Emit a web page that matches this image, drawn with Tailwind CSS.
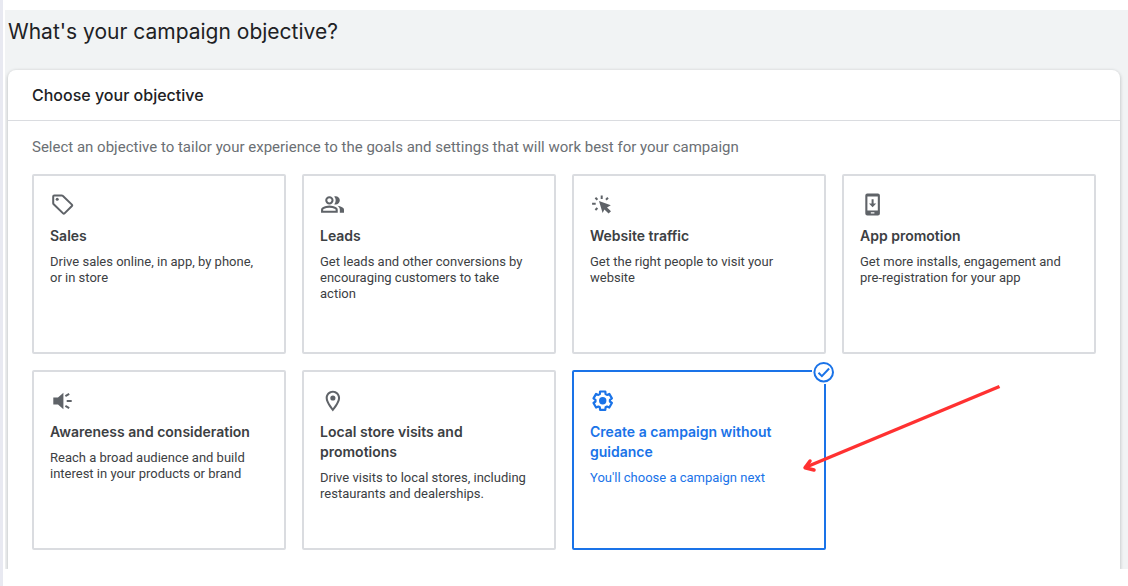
<!DOCTYPE html>
<html lang="en">
<head>
  <meta charset="UTF-8">
  <meta name="viewport" content="width=device-width, initial-scale=1.0">
  <title>Campaign objective</title>
  <script src="https://cdn.jsdelivr.net/npm/@tailwindcss/browser@4"></script>
</head>
<body class="min-h-screen bg-white border-l-3 border-[#e8e9f1] pt-[10px] pl-[2px] font-['Roboto',sans-serif] text-[#3c4043]">
  <main class="bg-[#f1f3f4] pt-2 pl-[3px] pr-2 overflow-hidden">
    <h1 class="font-['Inter',sans-serif] text-[21px] leading-7 text-[#202124]">What's your campaign objective?</h1>

    <section class="mt-6 bg-white rounded-t-lg shadow-[0_1px_3px_1px_rgba(60,64,67,0.2)]">
      <h2 id="objective-title" class="h-[51px] px-6 flex items-center border-b border-[#dadce0] font-['Inter',sans-serif] text-base font-medium text-[#202124]">Choose your objective</h2>

      <div class="px-6 pt-4 pb-[19px]">
        <p class="mb-[17px] text-[15px] leading-5 text-[#6b6f74]">Select an objective to tailor your experience to the goals and settings that will work best for your campaign</p>

        <div role="radiogroup" aria-labelledby="objective-title" class="grid grid-cols-4 gap-4">
          <label class="relative min-h-[180px] p-4 border-2 border-[#dadce0] rounded-xs cursor-pointer">
            <input type="radio" name="objective" value="sales" class="sr-only">
            <svg class="size-6 text-[#5f6368]" viewBox="0 0 24 24" fill="none" stroke="currentColor" stroke-width="2" stroke-linejoin="round" aria-hidden="true">
              <path d="M3.2 4.4q0-1 1-1h7.5q.6 0 1 .4l9.2 8.8q.7.7 0 1.4l-7.4 7.4q-.7.7-1.4 0l-9.4-9.2q-.5-.5-.5-1z"/>
              <circle cx="7.2" cy="7.3" r="1.5" fill="currentColor" stroke="none"/>
            </svg>
            <span class="block mt-[10px] font-['Inter',sans-serif] text-sm leading-5 font-semibold">Sales</span>
            <span class="block mt-2 text-[13px] leading-4">Drive sales online, in app, by phone, or in store</span>
          </label>

          <label class="relative min-h-[180px] p-4 border-2 border-[#dadce0] rounded-xs cursor-pointer">
            <input type="radio" name="objective" value="leads" class="sr-only">
            <svg class="size-6 text-[#5f6368]" viewBox="0 0 23 23" fill="currentColor" aria-hidden="true">
              <path d="M1 20v-2.8q0-.85.438-1.562Q1.875 14.925 2.6 14.55q1.55-.775 3.15-1.163Q7.35 13 9 13t3.25.387q1.6.388 3.15 1.163.725.375 1.162 1.088Q17 16.35 17 17.2V20Zm18 0v-3q0-1.1-.612-2.113-.613-1.012-1.738-1.737 1.275.15 2.4.512 1.125.363 2.1.888.9.5 1.375 1.112Q23 16.275 23 17v3ZM9 12q-1.65 0-2.825-1.175Q5 9.65 5 8q0-1.65 1.175-2.825Q7.35 4 9 4q1.65 0 2.825 1.175Q13 6.35 13 8q0 1.65-1.175 2.825Q10.65 12 9 12Zm10-4q0 1.65-1.175 2.825Q16.65 12 15 12q-.275 0-.7-.062-.425-.063-.7-.138.675-.8 1.037-1.775Q15 9.05 15 8q0-1.05-.363-2.025Q14.275 5 13.6 4.2q.35-.125.7-.163Q14.65 4 15 4q1.65 0 2.825 1.175Q19 6.35 19 8ZM3 18h12v-.8q0-.275-.137-.5-.138-.225-.363-.35-1.35-.675-2.725-1.012Q10.4 15 9 15t-2.775.338Q4.85 15.675 3.5 16.35q-.225.125-.362.35-.138.225-.138.5Zm6-8q.825 0 1.413-.588Q11 8.825 11 8t-.587-1.412Q9.825 6 9 6q-.825 0-1.412.588Q7 7.175 7 8t.588 1.412Q8.175 10 9 10Z"/>
            </svg>
            <span class="block mt-[10px] font-['Inter',sans-serif] text-sm leading-5 font-semibold">Leads</span>
            <span class="block mt-2 text-[13px] leading-4">Get leads and other conversions by encouraging customers to take action</span>
          </label>

          <label class="relative min-h-[180px] p-4 border-2 border-[#dadce0] rounded-xs cursor-pointer">
            <input type="radio" name="objective" value="traffic" class="sr-only">
            <svg class="size-6 text-[#5f6368]" viewBox="0 0 24 24" fill="currentColor" aria-hidden="true">
              <path d="M9 9l11.8 4.2-3.8 2.2 4 3.8-2.4 2.4-4.2-4.2-1.8 3.6z"/>
              <path d="M11.7 3.6V7M5.4 5.8l2 2M18 5.8l-2 2M2.1 11.8h3.6M5.4 18l2-2" fill="none" stroke="currentColor" stroke-width="2"/>
            </svg>
            <span class="block mt-[10px] font-['Inter',sans-serif] text-sm leading-5 font-semibold">Website traffic</span>
            <span class="block mt-2 text-[13px] leading-4">Get the right people to visit your website</span>
          </label>

          <label class="relative min-h-[180px] p-4 border-2 border-[#dadce0] rounded-xs cursor-pointer">
            <input type="radio" name="objective" value="app" class="sr-only">
            <svg class="size-6 text-[#5f6368]" viewBox="0 0 24 24" fill="currentColor" aria-hidden="true">
              <path fill-rule="evenodd" d="M7.3 1.4h10.6a2 2 0 0 1 2 2v18.2a2 2 0 0 1-2 2H7.3a2 2 0 0 1-2-2V3.4a2 2 0 0 1 2-2zM7.4 4.6v13.8h10.4V4.6zM10.8 20.3v1.3h3.6v-1.3z"/>
              <path d="M11.6 7.3h2v4.2h2.6l-3.6 3.8L9 11.5h2.6z"/>
            </svg>
            <span class="block mt-[10px] font-['Inter',sans-serif] text-sm leading-5 font-semibold">App promotion</span>
            <span class="block mt-2 text-[13px] leading-4">Get more installs, engagement and pre-registration for your app</span>
          </label>

          <label class="relative min-h-[180px] p-4 border-2 border-[#dadce0] rounded-xs cursor-pointer">
            <input type="radio" name="objective" value="awareness" class="sr-only">
            <svg class="size-6 text-[#5f6368]" viewBox="0 0 24 24" fill="currentColor" aria-hidden="true">
              <path d="M3.3 9.5H8l5.4-4.7v16.4L8 16.5H3.3z"/>
              <path d="M15.4 8.2l3.8-2.3M16.7 13h5M15.4 17.8l3.8 2.3" fill="none" stroke="currentColor" stroke-width="2"/>
            </svg>
            <span class="block mt-[10px] font-['Inter',sans-serif] text-sm leading-5 font-semibold">Awareness and consideration</span>
            <span class="block mt-2 text-[13px] leading-4">Reach a broad audience and build interest in your products or brand</span>
          </label>

          <label class="relative min-h-[180px] p-4 border-2 border-[#dadce0] rounded-xs cursor-pointer">
            <input type="radio" name="objective" value="local" class="sr-only">
            <svg class="size-6 text-[#5f6368]" viewBox="-0.5 -0.7 23.3 23.3" fill="currentColor" aria-hidden="true">
              <path d="M12 2C8.13 2 5 5.13 5 9c0 5.25 7 13 7 13s7-7.75 7-13c0-3.87-3.13-7-7-7zM7 9c0-2.76 2.24-5 5-5s5 2.24 5 5c0 2.88-2.88 7.19-5 9.88C9.92 16.21 7 11.85 7 9z"/>
              <circle cx="12" cy="9" r="2.5"/>
            </svg>
            <span class="block mt-[10px] font-['Inter',sans-serif] text-sm leading-5 font-semibold">Local store visits and promotions</span>
            <span class="block mt-2 text-[13px] leading-4">Drive visits to local stores, including restaurants and dealerships.</span>
          </label>

          <label class="relative min-h-[180px] p-4 border-2 border-[#1a73e8] rounded-xs text-[#1a73e8] cursor-pointer">
            <input type="radio" name="objective" value="custom" class="sr-only" checked>
            <svg class="size-6" viewBox="-12.7 -12.7 24 24" fill="none" stroke="currentColor" stroke-width="2.2" stroke-linejoin="round" aria-hidden="true">
              <path d="M-2.6-9.2H2.6L2.9-6.6 4.3-5.8 6.6-6.8 9.2-2.3 7.2-.8V.8L9.2 2.3 6.6 6.8 4.3 5.8 2.9 6.6 2.6 9.2H-2.6L-2.9 6.6-4.3 5.8-6.6 6.8-9.2 2.3-7.2.8V-.8L-9.2-2.3-6.6-6.8-4.3-5.8-2.9-6.6z"/>
              <circle r="3.7" fill="currentColor" stroke="none"/>
            </svg>
            <span class="block mt-[10px] font-['Inter',sans-serif] text-sm leading-5 font-semibold">Create a campaign without guidance</span>
            <span class="block mt-2 text-[13px] leading-4">You'll choose a campaign next</span>

            <svg class="absolute -top-3 -right-3 size-6 bg-white" viewBox="0 0 24 24" fill="none" stroke="currentColor" stroke-width="2" aria-hidden="true">
              <circle cx="11.7" cy="12.2" r="9.3"/>
              <path d="M6.5 12.7l3.4 3.4 7.2-7.6"/>
            </svg>
            <!-- callout arrow -->
            <svg class="absolute top-2 left-[226px] w-[204px] h-24 pointer-events-none" viewBox="0 0 204 96" fill="none" stroke="#ff3131" stroke-width="3.5" aria-hidden="true">
              <path d="M199.5 6.5L5 87.5"/>
              <path d="M10 81L5 87.7l9 2.3" stroke-linecap="round" stroke-linejoin="round"/>
            </svg>
          </label>
        </div>
      </div>
    </section>
  </main>
</body>
</html>
